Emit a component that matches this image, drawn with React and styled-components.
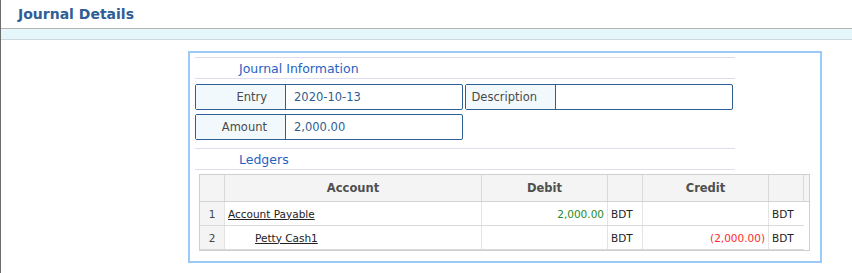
import React from "react"
import styled, { createGlobalStyle } from "styled-components"

const GlobalStyle = createGlobalStyle`
	html, body {
		margin: 0;
		padding: 0;
		background: #fff;
	}
	body {
		font-family: "DejaVu Sans", "Open Sans", sans-serif;
	}
`

const Page = styled.div`
	height: 273px;
	border-left: 1px solid #6b6b6b;
	box-sizing: border-box;
	overflow: hidden;
`

const TitleBar = styled.header`
	height: 28px;
	border-bottom: 1px solid #b5b5b5;
	display: flex;
	align-items: center;
	padding-left: 17px;
	h1 {
		margin: 0;
		font-size: 14px;
		font-weight: bold;
		color: #2f5e96;
	}
`

const Band = styled.div`
	height: 10px;
	background: #e6f7fc;
	border-bottom: 1px solid #cfd8dc;
`

const Panel = styled.section`
	margin: 11px 0 0 187px;
	width: 634px;
	height: 212px;
	box-sizing: border-box;
	border: 2px solid #9ccaf8;
	padding: 4px 5px 0 5px;
`

const SectionTitle = styled.div`
	width: 540px;
	height: 22px;
	box-sizing: border-box;
	border-top: 1px solid #dedcf0;
	border-bottom: 1px solid #dedcf0;
	padding-left: 44px;
	font-size: 12.5px;
	color: #1f62c4;
	display: flex;
	align-items: center;
`

const Fields = styled.div`
	display: grid;
	grid-template-columns: 268px 268px;
	column-gap: 2px;
	row-gap: 4px;
	margin: 5px 0 8px 0;
`

const Field = styled.div`
	display: flex;
	height: 26px;
	box-sizing: border-box;
	border: 1px solid #2e5f93;
	border-radius: 2px;
	font-size: 11.5px;
`

const Label = styled.div`
	width: 90px;
	flex: none;
	background: #f2f9fd;
	border-right: 1px solid #2e5f93;
	color: #4a4a4a;
	display: flex;
	align-items: center;
	justify-content: flex-end;
	padding-right: 18px;
	box-sizing: border-box;
`

const Value = styled.div`
	flex: 1;
	color: #2e5f93;
	display: flex;
	align-items: center;
	padding-left: 8px;
`

const Grid = styled.div`
	margin: 4px 0 0 4px;
	width: 611px;
	box-sizing: border-box;
	border: 1px solid #cfcfcf;
	font-size: 10.5px;
`

const HeadRow = styled.div`
	display: grid;
	grid-template-columns: 25px 257px 126px 35px 126px 35px 1fr;
	height: 26px;
	background: #f4f4f4;
	border-bottom: 1px solid #d3d3d3;
`

const HeadCell = styled.div`
	border-right: 1px solid #d9d9d9;
	display: flex;
	align-items: center;
	justify-content: center;
	font-weight: bold;
	font-size: 11.5px;
	color: #4f4f4f;
	&:last-child {
		border-right: none;
	}
`

const BodyRow = styled.div`
	display: grid;
	grid-template-columns: 25px 257px 126px 35px 126px 35px;
	width: 604px;
	height: 24px;
	box-sizing: border-box;
	border-bottom: 1px solid #d9d9d9;
`

const Cell = styled.div`
	border-right: 1px solid #e4e4e4;
	display: flex;
	align-items: center;
	justify-content: ${p => (p.$align === "right" ? "flex-end" : p.$align === "center" ? "center" : "flex-start")};
	padding: ${p => (p.$indent ? `0 0 0 ${p.$indent}px` : "0 3px")};
	color: ${p => p.$color || "#222"};
	background: ${p => (p.$num ? "#f4f4f4" : "transparent")};
	white-space: nowrap;
	overflow: hidden;
	&:last-child {
		border-right: none;
	}
	a {
		color: #222;
		text-decoration: underline;
	}
`

const ledgers = [
	{ account: "Account Payable", indent: 3, debit: "2,000.00", credit: "" },
	{ account: "Petty Cash1", indent: 30, debit: "", credit: "(2,000.00)" }
]

export default function App() {
	return (
		<>
			<GlobalStyle />
			<Page>
				<TitleBar>
					<h1>Journal Details</h1>
				</TitleBar>
				<Band />
				<Panel>
					<SectionTitle>Journal Information</SectionTitle>
					<Fields>
						<Field>
							<Label>Entry</Label>
							<Value>2020-10-13</Value>
						</Field>
						<Field>
							<Label>Description</Label>
							<Value></Value>
						</Field>
						<Field>
							<Label>Amount</Label>
							<Value>2,000.00</Value>
						</Field>
					</Fields>
					<SectionTitle>Ledgers</SectionTitle>
					<Grid>
						<HeadRow>
							<HeadCell />
							<HeadCell>Account</HeadCell>
							<HeadCell>Debit</HeadCell>
							<HeadCell />
							<HeadCell>Credit</HeadCell>
							<HeadCell />
							<HeadCell />
						</HeadRow>
						{ledgers.map((row, i) => (
							<BodyRow key={row.account}>
								<Cell $num $align="center" $color="#444">{i + 1}</Cell>
								<Cell $indent={row.indent}>
									<a href="#">{row.account}</a>
								</Cell>
								<Cell $align="right" $color="#1e8c1e">{row.debit}</Cell>
								<Cell>BDT</Cell>
								<Cell $align="right" $color="#ff2a2a">{row.credit}</Cell>
								<Cell>BDT</Cell>
							</BodyRow>
						))}
					</Grid>
				</Panel>
			</Page>
		</>
	)
}
